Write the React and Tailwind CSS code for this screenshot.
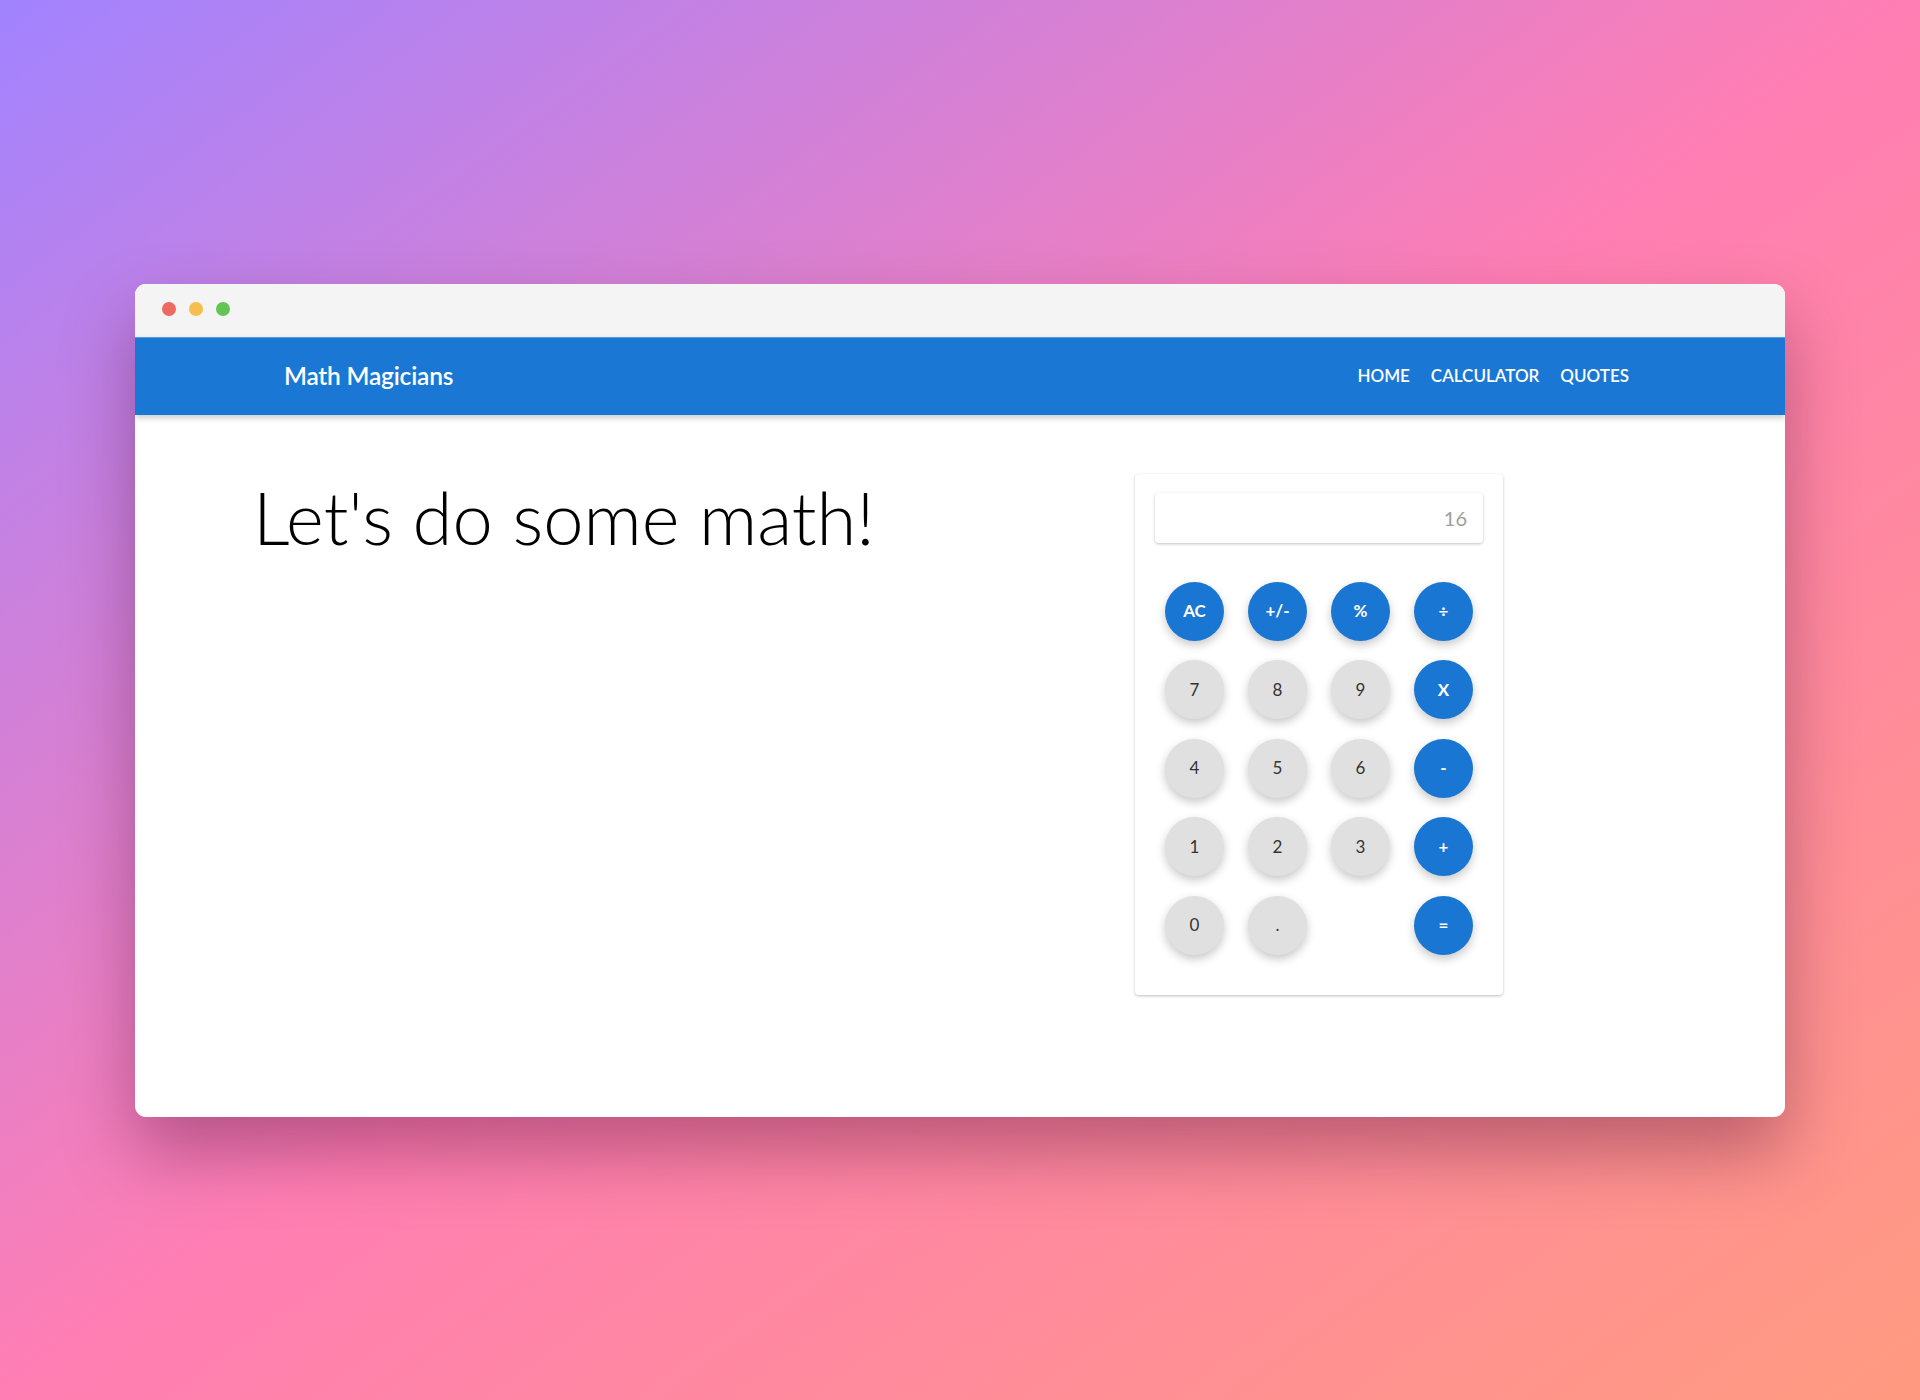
import React from 'react';

// --- Calculator keys ---
const keys = [
    { label: 'AC', kind: 'op' },
    { label: '+/-', kind: 'op' },
    { label: '%', kind: 'op' },
    { label: '÷', kind: 'op' },
    { label: '7', kind: 'num' },
    { label: '8', kind: 'num' },
    { label: '9', kind: 'num' },
    { label: 'X', kind: 'op' },
    { label: '4', kind: 'num' },
    { label: '5', kind: 'num' },
    { label: '6', kind: 'num' },
    { label: '-', kind: 'op' },
    { label: '1', kind: 'num' },
    { label: '2', kind: 'num' },
    { label: '3', kind: 'num' },
    { label: '+', kind: 'op' },
    { label: '0', kind: 'num' },
    { label: '.', kind: 'num' },
    { label: '', kind: 'empty' },
    { label: '=', kind: 'op' },
];

const Key = ({ label, kind }) => {
    if (kind === 'empty') return <div className="w-[59px] h-[59px]" />;
    const color = kind === 'op'
        ? 'bg-[#1976d2] text-white font-bold'
        : 'bg-[#e0e0e0] text-[#333] font-normal';
    return (
        <button className={`w-[59px] h-[59px] rounded-full flex items-center justify-center text-[17px] shadow-[0_4px_10px_rgba(0,0,0,0.22)] ${color}`}>
            {label}
        </button>
    );
};

const Calculator = () => (
    <div className="w-[368px] self-start bg-white rounded-[4px] shadow-[0_1px_3px_rgba(0,0,0,0.25)] pt-[19px] pb-[40px]">
        <div className="mx-[20px] h-[50px] rounded-[4px] bg-white shadow-[0_1px_3px_rgba(0,0,0,0.25)] flex items-center justify-end pr-[16px] text-[20px] text-[#9e9e9e]">
            16
        </div>
        <div className="grid grid-cols-4 gap-x-[24px] gap-y-[19.5px] px-[30px] mt-[39px]">
            {keys.map((k, i) => (
                <Key key={i} label={k.label} kind={k.kind} />
            ))}
        </div>
    </div>
);

const App = () => {
    return (
        <div className="w-full h-[1400px] flex items-center justify-center bg-[linear-gradient(to_bottom_right,#a183ff_0%,#ff7eb3_50%,#ff9b80_100%)] font-['Lato','Open_Sans',sans-serif]">
            <div className="w-[1650px] h-[833px] bg-white rounded-[11px] overflow-hidden shadow-[0_35px_70px_rgba(60,0,40,0.35)] flex flex-col">
                {/* window chrome */}
                <div className="h-[53px] bg-[#f4f4f4] flex items-center gap-[13px] pl-[27px] pb-[2px] shrink-0">
                    <span className="w-[14px] h-[14px] rounded-full bg-[#ee6a5f]" />
                    <span className="w-[14px] h-[14px] rounded-full bg-[#f5be4f]" />
                    <span className="w-[14px] h-[14px] rounded-full bg-[#62c554]" />
                </div>

                <header className="h-[78px] bg-[#1a78d4] border-t border-[#5a9ee0] shadow-[0_3px_6px_rgba(0,0,0,0.2)] flex items-center justify-between pl-[149px] pr-[156px] shrink-0 relative z-10">
                    <h1 className="text-white text-[24.5px] font-semibold tracking-[-0.2px]">Math Magicians</h1>
                    <nav className="flex items-center gap-[21px] text-white text-[17px] font-semibold">
                        <a href="#">HOME</a>
                        <a href="#">CALCULATOR</a>
                        <a href="#">QUOTES</a>
                    </nav>
                </header>

                <main className="flex-1 flex items-start pl-[118px] pr-[282px] pt-[59px]">
                    <div className="flex-1">
                        <h2 className="text-[72.3px] font-light text-black leading-[1.2]">Let's do some math!</h2>
                    </div>
                    <Calculator />
                </main>
            </div>
        </div>
    );
};

export default App;
